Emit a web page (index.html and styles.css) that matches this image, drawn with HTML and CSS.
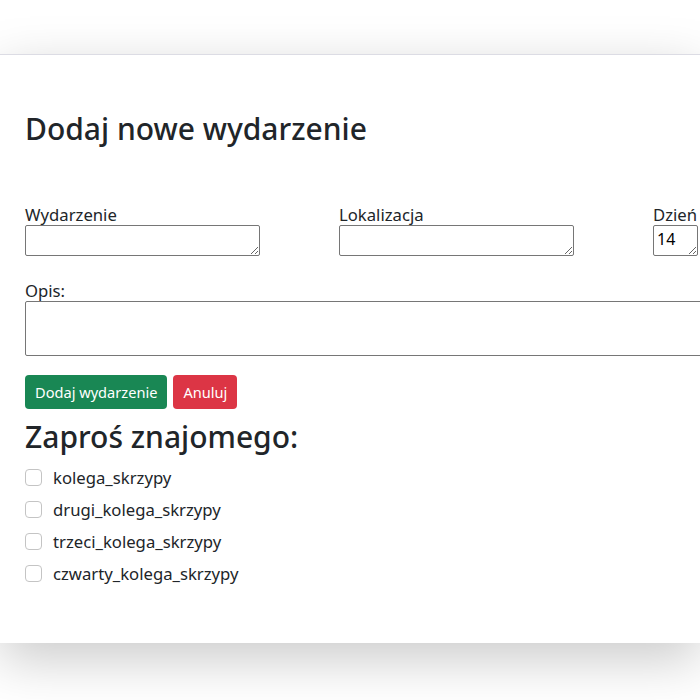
FILE: index.html
```html
<!DOCTYPE html>
<html lang="pl">
<head>
<meta charset="utf-8">
<link rel="stylesheet" href="styles.css">
</head>
<body>
<div class="topbar"></div>
<main class="card">
  <h1 class="title">Dodaj nowe wydarzenie</h1>
  <div class="fields">
    <div class="field">
      <label class="label">Wydarzenie</label>
      <textarea class="input wide"></textarea>
    </div>
    <div class="field">
      <label class="label">Lokalizacja</label>
      <textarea class="input wide"></textarea>
    </div>
    <div class="field">
      <label class="label">Dzień</label>
      <textarea class="input day">14</textarea>
    </div>
  </div>
  <div class="desc">
    <label class="label">Opis:</label>
    <textarea class="input long"></textarea>
  </div>
  <div class="actions">
    <button class="btn btn-green">Dodaj wydarzenie</button>
    <button class="btn btn-red">Anuluj</button>
  </div>
  <h2 class="subtitle">Zaproś znajomego:</h2>
  <ul class="friends">
    <li class="friend"><span class="check"></span><span>kolega_skrzypy</span></li>
    <li class="friend"><span class="check"></span><span>drugi_kolega_skrzypy</span></li>
    <li class="friend"><span class="check"></span><span>trzeci_kolega_skrzypy</span></li>
    <li class="friend"><span class="check"></span><span>czwarty_kolega_skrzypy</span></li>
  </ul>
</main>
</body>
</html>
```
FILE: styles.css
```css
html {
  overflow: hidden;
}
html, body {
  margin: 0;
  padding: 0;
  background: #ffffff;
}
body {
  font-family: "Noto Sans", "Open Sans", sans-serif;
  color: #212529;
  font-size: 16.7px;
  height: 700px;
}
.topbar {
  height: 54px;
}
.card {
  width: 100%;
  height: 589px;
  box-sizing: border-box;
  background: #ffffff;
  border-top: 1px solid #dcdce4;
  box-shadow: 0 16px 50px rgba(0, 0, 0, 0.21);
  padding: 0 0 0 25px;
  display: flex;
  flex-direction: column;
  overflow: hidden;
}
.title {
  font-size: 30px;
  font-weight: 500;
  margin: 55px 0 0 0;
  line-height: 38px;
}
.fields {
  display: flex;
  margin-top: 56px;
}
.field {
  width: 314px;
  flex: none;
  display: flex;
  flex-direction: column;
  align-items: flex-start;
}
.label {
  line-height: 21px;
  font-size: 16.7px;
}
.input {
  box-sizing: border-box;
  border: 1px solid #767676;
  border-radius: 2px;
  font-family: "Noto Sans", sans-serif;
  font-size: 16px;
  color: #000;
  padding: 2px 3px;
  margin: 0;
  line-height: 22px;
  background: #fff;
}
.wide {
  width: 235px;
  height: 31px;
}
.day {
  width: 45px;
  height: 31px;
}
.desc {
  margin-top: 24px;
  display: flex;
  flex-direction: column;
  align-items: flex-start;
}
.long {
  width: 900px;
  height: 55px;
  flex: none;
}
.actions {
  display: flex;
  gap: 6px;
  margin-top: 19px;
}
.btn {
  height: 34px;
  border: none;
  border-radius: 4px;
  color: #fff;
  font-family: "Noto Sans", sans-serif;
  font-size: 14.6px;
  padding: 0 10px;
}
.btn-green { background: #198754; }
.btn-red { background: #dc3545; }
.subtitle {
  font-size: 30px;
  font-weight: 500;
  margin: 9px 0 0 0;
  line-height: 38px;
}
.friends {
  list-style: none;
  margin: 5px 0 0 0;
  padding: 0;
}
.friend {
  display: flex;
  align-items: center;
  gap: 11px;
  height: 32px;
}
.check {
  width: 17px;
  height: 17px;
  box-sizing: border-box;
  border: 1px solid #c4c4c4;
  border-radius: 4px;
  background: #fff;
}
```
